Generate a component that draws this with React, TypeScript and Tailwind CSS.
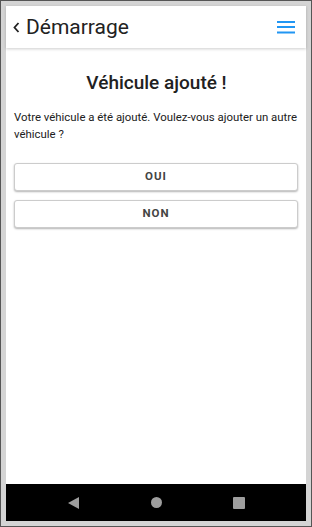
import React from "react";

export default function App() {
  return (
    <div className="w-[312px] h-[527px] bg-[#d4d4d4] border border-[#555] p-[5px] flex flex-col" style={{ fontFamily: "Roboto, 'Noto Sans', sans-serif" }}>
      <div className="flex-1 bg-white flex flex-col">
        <header className="h-[42px] flex items-center justify-between pl-[7px] pr-[11px] shadow-[0_1px_3px_rgba(0,0,0,0.2)] relative z-10">
          <div className="flex items-center">
            <svg width="7" height="11" viewBox="0 0 7 11" className="mr-[6px] mt-[1px]">
              <path d="M5.5 1 L1.5 5.5 L5.5 10" fill="none" stroke="#222" strokeWidth="1.8" />
            </svg>
            <span className="text-[21px] text-[#222] leading-none">Démarrage</span>
          </div>
          <svg width="18" height="14" viewBox="0 0 18 14" className="mt-[1px]">
            <rect x="0" y="0" width="18" height="2" fill="#2196f3" />
            <rect x="0" y="5" width="18" height="2" fill="#2196f3" />
            <rect x="0" y="10.5" width="18" height="2" fill="#2196f3" />
          </svg>
        </header>
        <main className="flex-1 pl-[8px] pr-[7px]">
          <h1 className="text-center text-[19px] font-medium text-[#212121] mt-[21px] leading-[28px]">Véhicule ajouté !</h1>
          <p className="text-[11.4px] text-[#212121] leading-[17px] mt-[12px] pr-[1px]">
            Votre véhicule a été ajouté. Voulez-vous ajouter un autre véhicule ?
          </p>
          <div className="flex flex-col gap-[9px] mt-[20px] pr-[1px]">
            <button className="h-[28px] w-full bg-white border border-[#ccc] rounded-[3px] shadow-[0_1px_2px_rgba(0,0,0,0.3)] text-[11.5px] font-bold tracking-[1px] text-[#444]">OUI</button>
            <button className="h-[28px] w-full bg-white border border-[#ccc] rounded-[3px] shadow-[0_1px_2px_rgba(0,0,0,0.3)] text-[11.5px] font-bold tracking-[1px] text-[#444]">NON</button>
          </div>
        </main>
      </div>
      <div className="h-[37px] bg-black flex items-center justify-center">
        <div className="w-[83px] flex justify-center">
          <svg width="11" height="12" viewBox="0 0 11 12"><path d="M11 0 L0 6 L11 12 Z" fill="#9e9e9e" /></svg>
        </div>
        <div className="w-[83px] flex justify-center">
          <div className="w-[11px] h-[11px] rounded-full bg-[#9e9e9e]" />
        </div>
        <div className="w-[83px] flex justify-center">
          <div className="w-[12px] h-[12px] rounded-[1px] bg-[#9e9e9e]" />
        </div>
      </div>
    </div>
  );
}
